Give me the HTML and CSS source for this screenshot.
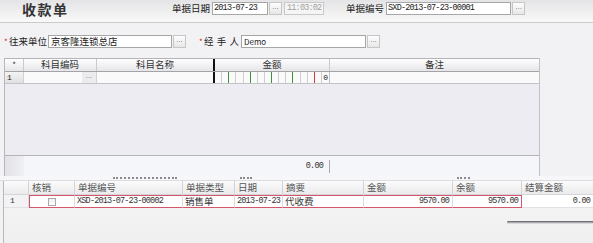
FILE: index.html
```html
<!DOCTYPE html>
<html lang="zh-CN">
<head>
<meta charset="utf-8">
<title>收款单</title>
<link rel="stylesheet" href="styles.css">
</head>
<body>
<header class="topbar">
  <h1 class="title">收款单</h1>
  <span class="lbl">单据日期</span>
  <span class="inp num w-date">2013-07-23</span>
  <span class="btn">...</span>
  <span class="inp num dis w-time">11:03:02</span>
  <span class="lbl lbl-no">单据编号</span>
  <span class="inp num w-no">SXD-2013-07-23-00001</span>
  <span class="btn">...</span>
</header>

<div class="formrow">
  <span class="req">*</span><span class="lbl">往来单位</span>
  <span class="inp w-unit">京客隆连锁总店</span>
  <span class="btn">...</span>
  <span class="req req2">*</span><span class="lbl lbl-spaced">经手人</span>
  <span class="inp w-person">Demo</span>
  <span class="btn">...</span>
</div>

<div class="grid1">
  <div class="g1-head">
    <div class="c c0 star">*</div>
    <div class="c c1">科目编码</div>
    <div class="c c2">科目名称</div>
    <div class="c c3 thick">金额</div>
    <div class="c c4">备注</div>
  </div>
  <div class="g1-row">
    <div class="c c0 rowhead">1</div>
    <div class="c c1 code"><span class="cellbtn">...</span></div>
    <div class="c c2"></div>
    <div class="c c3 thick money">
      <span class="dg"></span><span class="dg"></span><span class="dg green"></span><span class="dg"></span>
      <span class="dg"></span><span class="dg green"></span><span class="dg"></span><span class="dg"></span>
      <span class="dg green"></span><span class="dg"></span><span class="dg"></span><span class="dg green"></span>
      <span class="dg"></span><span class="dg"></span><span class="dg red"></span><span class="dg zero">0</span>
    </div>
    <div class="c c4"></div>
  </div>
  <div class="g1-body"></div>
  <div class="g1-total">
    <div class="tot-head"></div>
    <div class="tot-val num">0.00</div>
    <span class="tot-sep"></span>
  </div>
</div>

<div class="splitter">
  <span class="dots d1"></span><span class="dots d2"></span><span class="dots d3"></span>
</div>

<div class="grid2">
  <div class="g2">
    <div class="h"></div>
    <div class="h">核销</div>
    <div class="h">单据编号</div>
    <div class="h">单据类型</div>
    <div class="h">日期</div>
    <div class="h">摘要</div>
    <div class="h">金额</div>
    <div class="h">余额</div>
    <div class="h last">结算金额</div>

    <div class="d rn">1</div>
    <div class="d ck sl sl-l"><span class="box"></span></div>
    <div class="d num sl">XSD-2013-07-23-00002</div>
    <div class="d sl">销售单</div>
    <div class="d num sl">2013-07-23</div>
    <div class="d sl">代收费</div>
    <div class="d num r sl">9570.00</div>
    <div class="d num r sl sl-r">9570.00</div>
    <div class="d num r last">0.00</div>
  </div>
  <div class="shadow"></div>
</div>
</body>
</html>
```

FILE: styles.css
```css
* { box-sizing: border-box; margin: 0; padding: 0; }
html, body { width: 593px; height: 243px; overflow: hidden; }
body {
  background: #f2f2f5;
  font-family: "Noto Sans CJK SC", "Noto Sans", sans-serif;
  font-size: 9.5px;
  color: #222;
  line-height: 1;
}
.num {
  font-family: "Liberation Mono", "DejaVu Sans Mono", monospace;
  font-size: 8.5px;
  letter-spacing: -0.8px;
}

/* top bar */
.topbar {
  height: 23px;
  display: flex;
  align-items: center;
  padding-bottom: 5px;
  background: linear-gradient(#e4e4e6, #f9f9f9);
  border-bottom: 1px solid #cbcbcb;
}
.title {
  width: 172px;
  padding-left: 22px;
  font-size: 14px;
  font-weight: bold;
  letter-spacing: 1.5px;
  color: #333;
}
.lbl { white-space: nowrap; color: #222; }
.lbl-no { margin-left: 22px; }

.inp {
  height: 13px;
  border: 1px solid #a6a6a6;
  background: #fff;
  padding-left: 1px;
  display: flex;
  align-items: center;
  white-space: nowrap;
  overflow: hidden;
  color: #222;
}
.topbar .inp { margin-left: 2px; }
.inp.dis { background: #f5f5f5; border-color: #c9c9c9; color: #a0a0a0; padding-left: 2px; }
.w-date { width: 56px; }
.w-time { width: 40px; }
.w-no { width: 125px; }
.btn {
  width: 13px;
  height: 13px;
  margin-left: 1px;
  border: 1px solid #c6c6c6;
  background: linear-gradient(#fdfdfd, #e7e7e7);
  color: #7a7a7a;
  font-family: "Liberation Sans", sans-serif;
  font-size: 8px;
  display: flex;
  align-items: center;
  justify-content: center;
  padding-bottom: 3px;
  letter-spacing: 0;
}

/* form row */
.formrow {
  margin-top: 12px;
  height: 13px;
  display: flex;
  align-items: center;
}
.req { width: 5px; margin-left: 4px; color: #d42020; font-size: 8px; }
.req2 { margin-left: 13px; }
.formrow .inp { margin-left: 1px; padding-left: 2px; }
.w-unit { width: 124px; }
.w-person { width: 125px; margin-left: 2px; font-size: 8px; }
.lbl-spaced { width: 36px; letter-spacing: 3.2px; }

/* grid 1 */
.grid1 {
  margin-top: 10px;
  margin-left: 4px;
  width: 536px;
  border-left: 1px solid #b8b8bc;
  border-right: 1px solid #c2c2c6;
}
.g1-head, .g1-row { display: flex; }
.g1-head {
  height: 14px;
  background: linear-gradient(#fefefe, #e6e6ea);
  border-top: 1px solid #b4b4b8;
  border-bottom: 1px solid #a4a4a8;
}
.g1-head .c {
  display: flex; align-items: center; justify-content: center;
  color: #333;
  border-right: 1px solid #c9c9cd;
}
.c0 { width: 19px; }
.c1 { width: 73px; }
.c2 { width: 116px; }
.c3 { width: 117px; }
.c4 { flex: 1; border-right: none !important; }
.star { color: #9a9aa0; font-size: 8px; }
.thick { border-left: 2px solid #111; }
.g1-head .c2 { border-right: none; }

.g1-row {
  height: 12px;
  background: #fafafb;
  border-bottom: 1px solid #c4c4c8;
}
.g1-row .c { border-right: 1px solid #d2d2d6; }
.g1-row .c2 { border-right: none; }
.rowhead {
  background: linear-gradient(#f4f4f4, #e0e0e2);
  padding-left: 2px;
  font-size: 8px;
  display: flex; align-items: center;
  font-family: "Liberation Mono", monospace;
}
.code { display: flex; justify-content: flex-end; }
.cellbtn {
  width: 14px;
  background: #ececee;
  color: #777;
  font-family: "Liberation Sans", sans-serif;
  font-size: 8px;
  display: flex; align-items: center; justify-content: center;
  padding-bottom: 3px;
}
.money { display: flex; border-right: 1px solid #c2c2c6 !important; }
.dg { flex: 1; border-left: 1px solid #cfcfd3; }
.dg:first-child { border-left: none; }
.dg.green { border-left-color: #3c8f3c; }
.dg.red { border-left-color: #d23a3a; }
.zero {
  display: flex; align-items: center; justify-content: flex-end;
  padding-right: 1px;
  font-family: "Liberation Mono", monospace;
  font-size: 8px;
}

.g1-body { height: 71px; background: #ececf2; }
.g1-total {
  height: 21px;
  display: flex;
  align-items: center;
  background: #f5f6fa;
  border-top: 1px solid #b4b4b8;
}
.tot-head { width: 19px; height: 100%; background: linear-gradient(90deg, #e2e2e6, #f0f0f4); }
.tot-val { width: 305px; text-align: right; padding-right: 6px; color: #333; }
.tot-sep { width: 1px; height: 13px; background: #a8a8ac; }

/* splitter */
.splitter {
  height: 5px;
  display: flex;
  padding-left: 113px;
  padding-top: 1px;
  background: #f7f7f9;
  border-bottom: 1px solid #dcdce0;
}
.dots { height: 2px; border-top: 2px dotted #8a8a8e; }
.d1 { width: 64px; }
.d2 { width: 12px; margin-left: 63px; }
.d3 { width: 13px; margin-left: 205px; }

/* grid 2 */
.grid2 {
  margin-left: 3px;
  height: 62px;
  background: linear-gradient(#f6f6f6, #efeff0);
  border-left: 1px solid #b8b8bc;
}
.g2 {
  display: grid;
  grid-template-columns: 25px 46px 108px 52px 48px 81px 89px 69px 1fr;
  grid-template-rows: 14px 13px;
}
.h {
  background: linear-gradient(#fbfbfb, #ebebed);
  border-right: 1px solid #d3d3d6;
  border-bottom: 1px solid #d6d6d9;
  color: #555;
  padding-left: 3px;
  display: flex; align-items: center;
}
.h.last, .d.last { border-right: none; }
.d {
  background: #fff;
  border-right: 1px solid #dcdcdf;
  border-bottom: 1px solid #e2e2e4;
  color: #333;
  padding-left: 2px;
  display: flex; align-items: center;
  white-space: nowrap;
}
.d.r { justify-content: flex-end; padding-right: 3px; }
.rn { padding-left: 6px; font-family: "Liberation Mono", monospace; font-size: 8px; background: #f3f3f5; }
.ck { justify-content: center; padding-left: 0; }
.box {
  width: 8px; height: 8px;
  border: 1px solid #a8a8ac;
  background: linear-gradient(#f0f0f0, #fdfdfd);
}
.sl { border-top: 1px solid #d4566a; border-bottom: 1px solid #d4566a; }
.sl-l { border-left: 1px solid #d4566a; }
.sl-r { border-right: 1px solid #d4566a; }
.shadow {
  margin-top: 13px;
  margin-left: 503px;
  width: 87px;
  height: 3px;
  background: linear-gradient(#5a5a5e, #a8a8ac 50%, rgba(200,200,204,0));
  border-radius: 1px 0 0 1px;
}
```
